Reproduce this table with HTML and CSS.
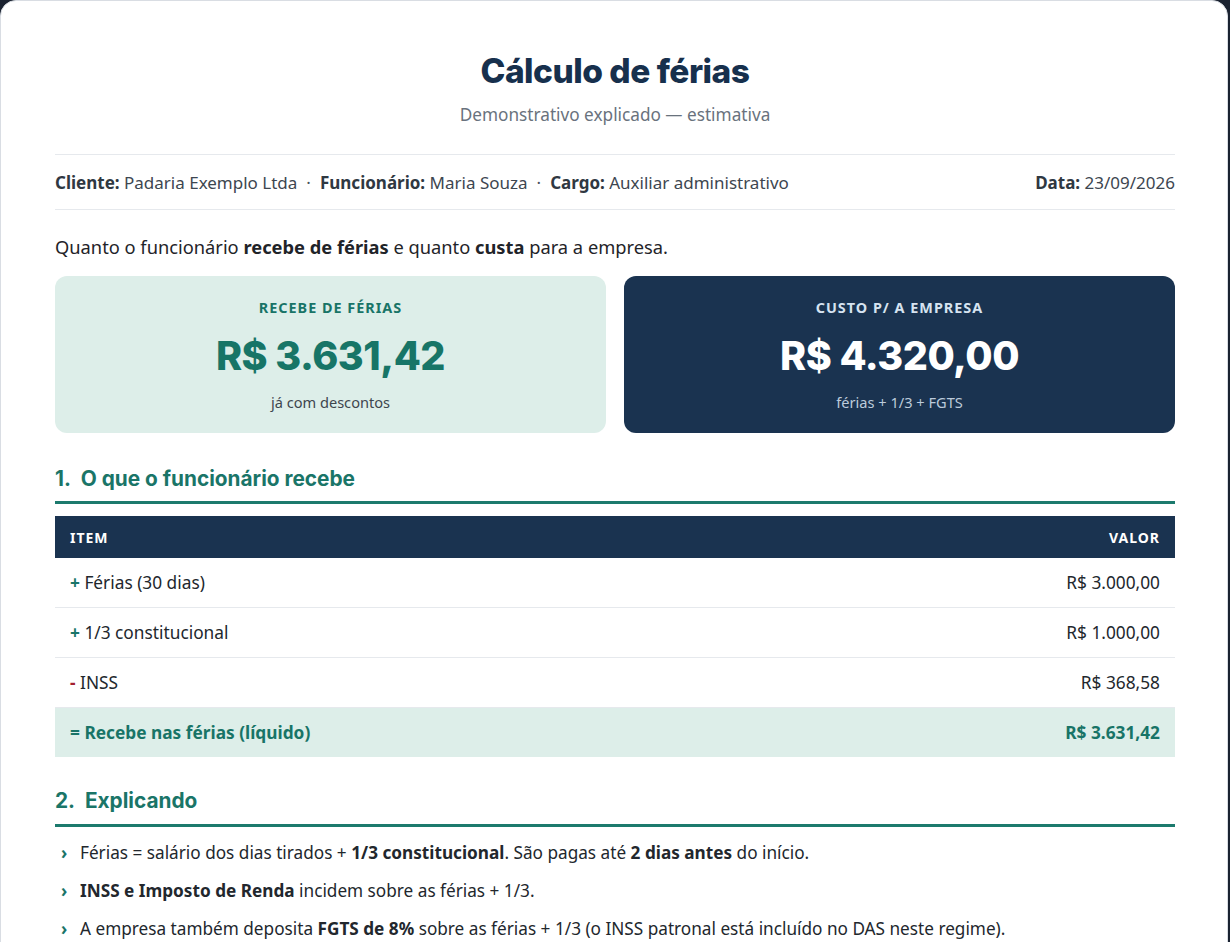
FILE: index.html
```html
<!DOCTYPE html>
<html lang="pt-BR">
<head>
<meta charset="utf-8">
<title>Cálculo de férias</title>
<link rel="stylesheet" href="styles.css">
</head>
<body>
<main class="sheet">
  <header class="head">
    <h1 class="title">Cálculo de férias</h1>
    <p class="subtitle">Demonstrativo explicado — estimativa</p>
  </header>

  <div class="meta">
    <div class="meta-left">
      <span><b>Cliente:</b> Padaria Exemplo Ltda</span>
      <span class="dot">·</span>
      <span><b>Funcionário:</b> Maria Souza</span>
      <span class="dot">·</span>
      <span><b>Cargo:</b> Auxiliar administrativo</span>
    </div>
    <div class="meta-right"><b>Data:</b> 23/09/2026</div>
  </div>

  <p class="intro">Quanto o funcionário <b>recebe de férias</b> e quanto <b>custa</b> para a empresa.</p>

  <section class="cards">
    <div class="card card-light">
      <div class="card-label">Recebe de férias</div>
      <div class="card-value">R$ 3.631,42</div>
      <div class="card-sub">já com descontos</div>
    </div>
    <div class="card card-dark">
      <div class="card-label">Custo p/ a empresa</div>
      <div class="card-value">R$ 4.320,00</div>
      <div class="card-sub">férias + 1/3 + FGTS</div>
    </div>
  </section>

  <h2 class="section-title section-first">1.&nbsp; O que o funcionário recebe</h2>

  <table class="table">
    <thead>
      <tr><th class="col-item">Item</th><th class="col-val">Valor</th></tr>
    </thead>
    <tbody>
      <tr><td><span class="plus">+</span> Férias (30 dias)</td><td class="col-val">R$ 3.000,00</td></tr>
      <tr><td><span class="plus">+</span> 1/3 constitucional</td><td class="col-val">R$ 1.000,00</td></tr>
      <tr><td><span class="minus">-</span> INSS</td><td class="col-val">R$ 368,58</td></tr>
      <tr class="total"><td>= Recebe nas férias (líquido)</td><td class="col-val">R$ 3.631,42</td></tr>
    </tbody>
  </table>

  <h2 class="section-title">2.&nbsp; Explicando</h2>

  <ul class="notes">
    <li>Férias = salário dos dias tirados + <b>1/3 constitucional</b>. São pagas até <b>2 dias antes</b> do início.</li>
    <li><b>INSS e Imposto de Renda</b> incidem sobre as férias + 1/3.</li>
    <li>A empresa também deposita <b>FGTS de 8%</b> sobre as férias + 1/3 (o INSS patronal está incluído no DAS neste regime).</li>
  </ul>
</main>
</body>
</html>
```

FILE: styles.css
```css
html, body {
  margin: 0;
  padding: 0;
}
body {
  background: #1a2230;
  font-family: "Noto Sans", "Liberation Sans", sans-serif;
  color: #1f2933;
}
.sheet {
  width: 1228px;
  box-sizing: border-box;
  min-height: 942px;
  background: #ffffff;
  border: 1px solid #d9dde3;
  border-radius: 16px 16px 0 0;
  padding: 48px 52px 0 54px;
}
.head {
  text-align: center;
}
.title {
  margin: 0;
  font-family: "Inter", "Liberation Sans", sans-serif;
  font-weight: 800;
  font-size: 33.5px;
  letter-spacing: -0.5px;
  line-height: 44px;
  color: #17304d;
}
.subtitle {
  margin: 11px 0 0 0;
  font-size: 17.2px;
  line-height: 22px;
  color: #69727d;
}
.meta {
  margin-top: 28px;
  border-top: 1px solid #e6e9ed;
  border-bottom: 1px solid #e6e9ed;
  display: flex;
  justify-content: space-between;
  align-items: center;
  height: 54px;
  font-size: 17px;
  color: #3d4650;
}
.meta b {
  color: #2f3842;
  font-weight: 700;
}
.meta-left {
  display: flex;
  gap: 9px;
}
.dot {
  color: #4a525c;
}
.intro {
  margin: 24px 0 0 0;
  font-size: 18.3px;
  line-height: 26px;
  color: #1f2429;
}
.intro b {
  font-weight: 700;
}
.cards {
  margin-top: 16px;
  display: grid;
  grid-template-columns: 1fr 1fr;
  gap: 18px;
}
.card {
  height: 157px;
  box-sizing: border-box;
  border-radius: 12px;
  text-align: center;
  padding-top: 22px;
}
.card-light {
  background: #ddeee9;
}
.card-dark {
  background: #1a3350;
}
.card-label {
  font-size: 14.4px;
  font-weight: 700;
  letter-spacing: 1px;
  text-transform: uppercase;
  line-height: 20px;
}
.card-light .card-label { color: #187467; }
.card-dark .card-label { color: #d6e3f0; }
.card-value {
  margin-top: 14px;
  font-family: "Inter", "Liberation Sans", sans-serif;
  font-weight: 800;
  font-size: 39.5px;
  line-height: 48px;
  letter-spacing: -0.5px;
}
.card-light .card-value { color: #177567; }
.card-dark .card-value { color: #ffffff; }
.card-sub {
  margin-top: 12px;
  font-size: 14.6px;
  line-height: 20px;
}
.card-light .card-sub { color: #3e464e; }
.card-dark .card-sub { color: #bccbdb; }

.section-title {
  margin: 30px 0 0 0;
  padding-bottom: 9px;
  border-bottom: 3px solid #1c7a6d;
  font-family: "Inter", "Liberation Sans", sans-serif;
  font-weight: 700;
  font-size: 20.8px;
  line-height: 28px;
  color: #1a7568;
}
.section-first {
  margin-top: 32px;
  padding-bottom: 8px;
}
.table {
  margin-top: 12px;
  width: 100%;
  border-collapse: collapse;
}
.table th {
  background: #1a3350;
  color: #ffffff;
  font-size: 14px;
  font-weight: 700;
  letter-spacing: 1px;
  text-transform: uppercase;
  height: 42px;
  padding: 0 15px;
  text-align: left;
}
.table th.col-val, .table td.col-val {
  text-align: right;
}
.table td {
  height: 49px;
  padding: 0 15px;
  font-size: 17.3px;
  color: #22272d;
  border-bottom: 1px solid #e6e9ed;
}
.plus {
  color: #1a7568;
  font-weight: 700;
}
.minus {
  color: #a3202f;
  font-weight: 700;
}
.total td {
  background: #ddeee9;
  color: #187467;
  font-weight: 700;
  border-bottom: none;
}
.notes {
  list-style: none;
  margin: 14px 0 0 0;
  padding: 0;
}
.notes li {
  position: relative;
  padding-left: 25px;
  font-size: 17.2px;
  line-height: 24px;
  margin-bottom: 14px;
  color: #22272d;
}
.notes li::before {
  content: "›";
  position: absolute;
  left: 6px;
  top: 0;
  color: #1a7568;
  font-weight: 700;
}
```
